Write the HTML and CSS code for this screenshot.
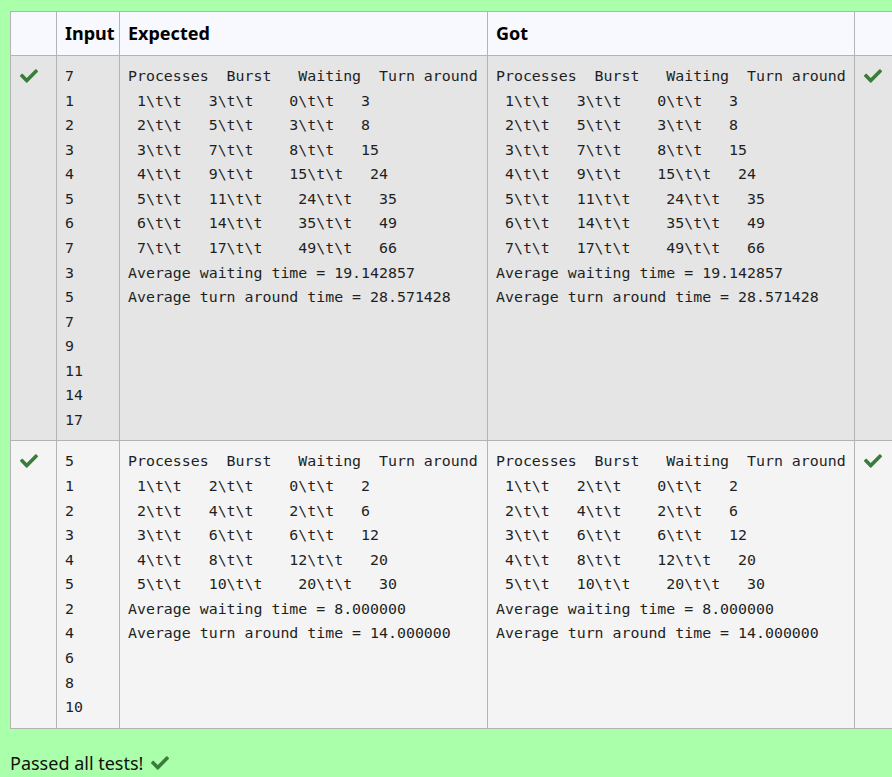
FILE: index.html
```html
<!DOCTYPE html>
<html>
<head>
<meta charset="utf-8">
<link rel="stylesheet" href="styles.css">
</head>
<body>
<svg width="0" height="0" class="defs">
  <defs>
    <symbol id="chk" viewBox="0 0 512 512">
      <path d="M173.898 439.404l-166.4-166.4c-9.997-9.997-9.997-26.206 0-36.204l36.203-36.204c9.997-9.998 26.207-9.998 36.204 0L192 312.69 432.095 72.596c9.997-9.997 26.207-9.997 36.204 0l36.203 36.204c9.997 9.997 9.997 26.206 0 36.204l-294.4 294.401c-9.998 9.997-26.207 9.997-36.204-.001z"/>
    </symbol>
  </defs>
</svg>
<div class="page">
  <table class="results">
    <colgroup>
      <col class="c-mark"><col class="c-input"><col class="c-exp"><col class="c-got"><col class="c-mark2">
    </colgroup>
    <thead>
      <tr class="head">
        <th></th><th>Input</th><th>Expected</th><th>Got</th><th></th>
      </tr>
    </thead>
    <tbody>
      <tr class="r1">
        <td class="mark"><svg class="ic"><use href="#chk"/></svg></td>
        <td><pre>7
1
2
3
4
5
6
7
3
5
7
9
11
14
17</pre></td>
        <td><pre>Processes  Burst   Waiting  Turn around
 1\t\t   3\t\t    0\t\t   3
 2\t\t   5\t\t    3\t\t   8
 3\t\t   7\t\t    8\t\t   15
 4\t\t   9\t\t    15\t\t   24
 5\t\t   11\t\t    24\t\t   35
 6\t\t   14\t\t    35\t\t   49
 7\t\t   17\t\t    49\t\t   66
Average waiting time = 19.142857
Average turn around time = 28.571428</pre></td>
        <td><pre>Processes  Burst   Waiting  Turn around
 1\t\t   3\t\t    0\t\t   3
 2\t\t   5\t\t    3\t\t   8
 3\t\t   7\t\t    8\t\t   15
 4\t\t   9\t\t    15\t\t   24
 5\t\t   11\t\t    24\t\t   35
 6\t\t   14\t\t    35\t\t   49
 7\t\t   17\t\t    49\t\t   66
Average waiting time = 19.142857
Average turn around time = 28.571428</pre></td>
        <td class="mark"><svg class="ic"><use href="#chk"/></svg></td>
      </tr>
      <tr class="r2">
        <td class="mark"><svg class="ic"><use href="#chk"/></svg></td>
        <td><pre>5
1
2
3
4
5
2
4
6
8
10</pre></td>
        <td><pre>Processes  Burst   Waiting  Turn around
 1\t\t   2\t\t    0\t\t   2
 2\t\t   4\t\t    2\t\t   6
 3\t\t   6\t\t    6\t\t   12
 4\t\t   8\t\t    12\t\t   20
 5\t\t   10\t\t    20\t\t   30
Average waiting time = 8.000000
Average turn around time = 14.000000</pre></td>
        <td><pre>Processes  Burst   Waiting  Turn around
 1\t\t   2\t\t    0\t\t   2
 2\t\t   4\t\t    2\t\t   6
 3\t\t   6\t\t    6\t\t   12
 4\t\t   8\t\t    12\t\t   20
 5\t\t   10\t\t    20\t\t   30
Average waiting time = 8.000000
Average turn around time = 14.000000</pre></td>
        <td class="mark"><svg class="ic"><use href="#chk"/></svg></td>
      </tr>
    </tbody>
  </table>
  <p class="passed">Passed all tests! <svg class="ic ic-pass"><use href="#chk"/></svg></p>
</div>
</body>
</html>
```

FILE: styles.css
```css
html, body {
  margin: 0;
  padding: 0;
  background: #aaffaa;
  overflow: hidden;
}
.defs {
  position: absolute;
  width: 0;
  height: 0;
}
.page {
  padding: 11px 0 0 10px;
  width: 1000px;
  font-family: "Noto Sans", "Open Sans", sans-serif;
  color: #1d2125;
}
.results {
  border-collapse: collapse;
  table-layout: fixed;
  width: 891px;
}
.c-mark { width: 46px; }
.c-input { width: 63px; }
.c-exp { width: 368px; }
.c-got { width: 367px; }
.c-mark2 { width: 46px; }
.results th, .results td {
  border: 1px solid #b4b4b4;
  vertical-align: top;
  text-align: left;
}
.results th {
  background: #f8f9fe;
  font-weight: 700;
  font-size: 18px;
  line-height: 27px;
  padding: 8px 7px 8px 8px;
  color: #000;
  height: 43px;
  box-sizing: border-box;
}
.results td {
  padding: 8px 7px 8px 8px;
}
.r1 td { background: #e5e5e5; }
.r2 td { background: #f4f4f4; }
pre {
  margin: 0;
  font-family: "DejaVu Sans Mono", "Liberation Mono", monospace;
  font-size: 14.9px;
  line-height: 24.57px;
  color: #1f1f1f;
  white-space: pre;
}
.mark {
  padding-left: 9px !important;
}
.ic {
  width: 18px;
  height: 18px;
  fill: #3a7c3a;
  display: block;
  margin-top: 3px;
}
.passed {
  margin: 22px 0 0 0;
  font-size: 18px;
  line-height: 24px;
  color: #111;
  display: flex;
  align-items: center;
  gap: 8px;
}
.ic-pass {
  display: inline-block;
  margin-top: 0;
}
```
